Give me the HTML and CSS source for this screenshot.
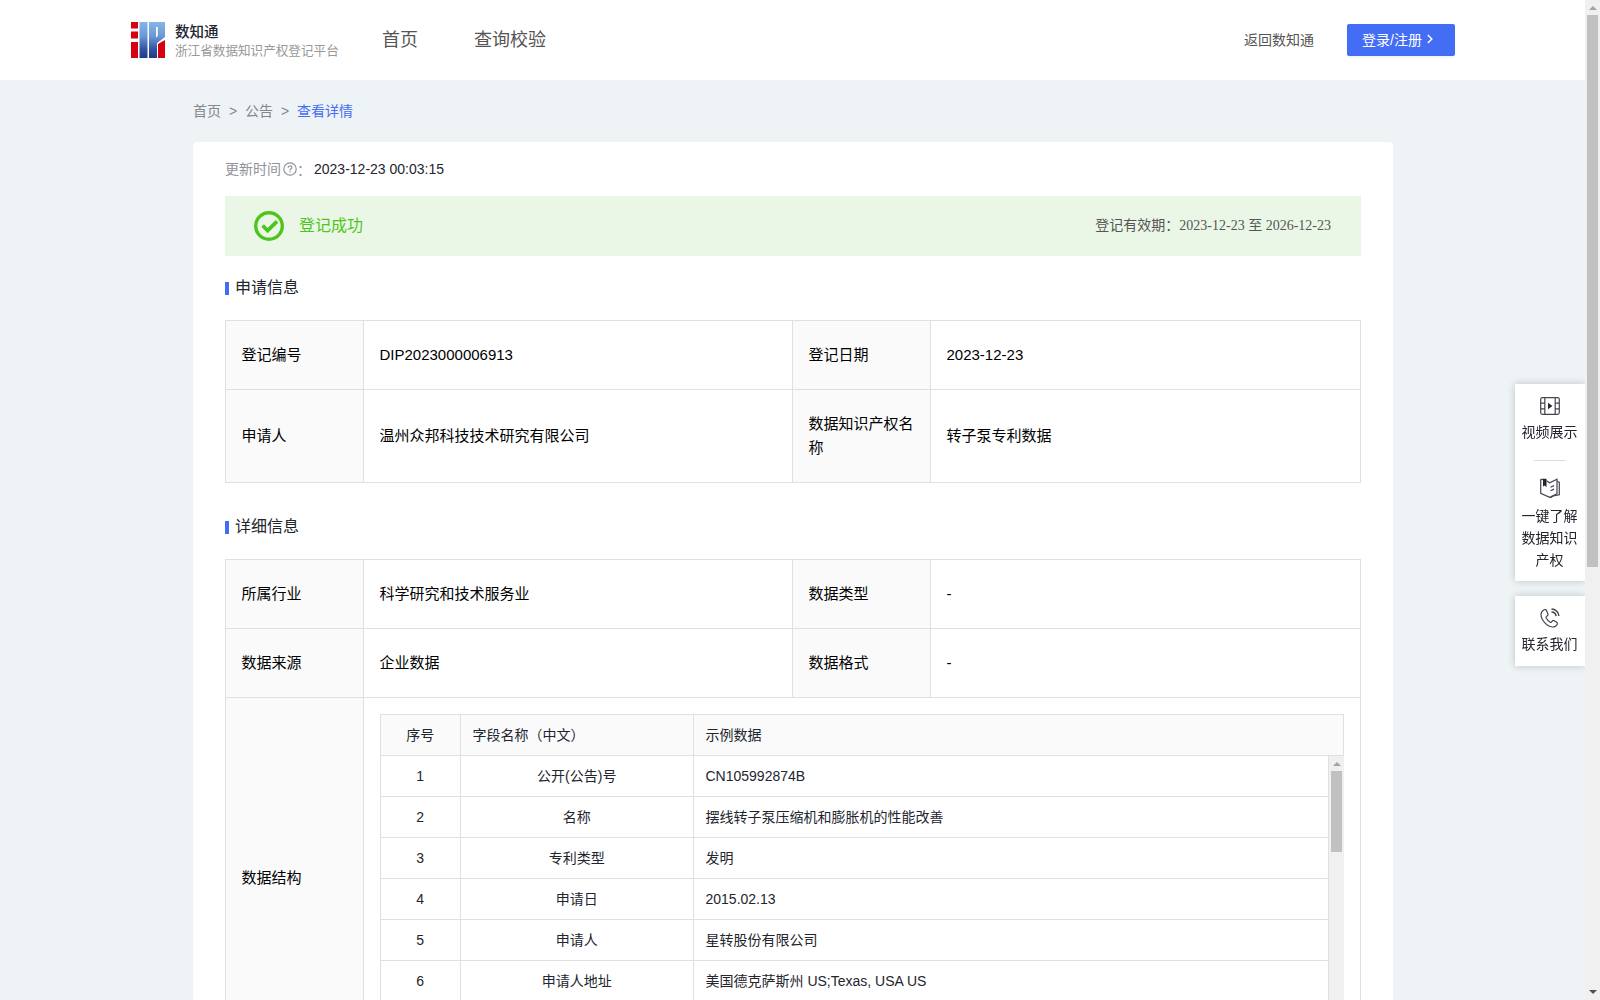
FILE: index.html
```html
<!DOCTYPE html>
<html lang="zh-CN">
<head>
  <meta charset="UTF-8">
  <meta name="viewport" content="width=device-width, initial-scale=1.0">
  <title>浙江省数据知识产权登记平台</title>
  <link rel="stylesheet" href="styles.css">
</head>
<body>
  <div class="page">
    <header class="header">
      <a href="#" class="brand">
        <svg class="logo" viewBox="0 0 34 36" width="34" height="36">
          <defs>
            <linearGradient id="blue" x1="0" y1="0" x2="0" y2="1">
              <stop offset="0" stop-color="#86b4e8"/>
              <stop offset="0.4" stop-color="#6a98d6"/>
              <stop offset="0.75" stop-color="#3454a2"/>
              <stop offset="1" stop-color="#253a85"/>
            </linearGradient>
          </defs>
          <path fill="#d7000f" d="M0 0h7v6.5H0zM0 9.500h7v7H0zM0 20h7v16H0zM27 22l7-4v18h-7z"/>
          <path fill="url(#blue)" fill-rule="evenodd" d="M8.500 0h8v36h-8zM18 0h16v15l-8 6v15h-8zM25 5v10.500l1.800-1.500V5z"/>
        </svg>
        <div class="brand-text">
          <div class="brand-name">数知通</div>
          <div class="brand-sub">浙江省数据知识产权登记平台</div>
        </div>
      </a>
      <nav class="nav">
        <a href="#">首页</a>
        <a href="#">查询校验</a>
      </nav>
      <div class="header-right">
        <a href="#" class="back">返回数知通</a>
        <a href="#" class="login">登录/注册
          <svg viewBox="0 0 8 10" width="8" height="10"><path d="M1.8 1l4 4-4 4" fill="none" stroke="#fff" stroke-width="1.5"/></svg>
        </a>
      </div>
    </header>

    <main class="main">
      <div class="breadcrumb">
        <a href="#">首页</a><span>&gt;</span><a href="#">公告</a><span>&gt;</span><a href="#" class="current">查看详情</a>
      </div>

      <section class="card">
        <div class="update">
          <span class="update-label">更新时间</span>
          <svg viewBox="0 0 14 14" width="14" height="14" fill="none" stroke="#909399">
            <circle cx="7" cy="7" r="6.2" stroke-width="1.2"/>
            <path d="M5.1 5.7C5.1 3.2 8.9 3.3 8.9 5.5 8.9 6.8 7 6.9 7 8.4M7 9.3v1.2" stroke-width="1.2"/>
          </svg>
          <span class="colon">：</span>
          <span class="time">2023-12-23 00:03:15</span>
        </div>

        <div class="status">
          <svg viewBox="0 0 30 30" width="30" height="30" fill="none" stroke="#4fc51c">
            <circle cx="15" cy="15" r="13.3" stroke-width="3.4"/>
            <path d="M8.6 14.5l5 5 9.4-9.2" stroke-width="3.8"/>
          </svg>
          <span class="status-text">登记成功</span>
          <span class="validity">登记有效期：2023-12-23 至 2026-12-23</span>
        </div>

        <h2 class="title"><span>申请信息</span></h2>
        <div class="info apply">
          <div class="label">登记编号</div>
          <div class="value">DIP2023000006913</div>
          <div class="label">登记日期</div>
          <div class="value">2023-12-23</div>
          <div class="label">申请人</div>
          <div class="value">温州众邦科技技术研究有限公司</div>
          <div class="label">数据知识产权名称</div>
          <div class="value">转子泵专利数据</div>
        </div>

        <h2 class="title"><span>详细信息</span></h2>
        <div class="info detail">
          <div class="label">所属行业</div>
          <div class="value">科学研究和技术服务业</div>
          <div class="label">数据类型</div>
          <div class="value">-</div>
          <div class="label">数据来源</div>
          <div class="value">企业数据</div>
          <div class="label">数据格式</div>
          <div class="value">-</div>
          <div class="label">数据结构</div>
          <div class="value wide">
            <div class="fields">
              <div class="row head"><div>序号</div><div>字段名称（中文）</div><div>示例数据</div></div>
              <div class="fields-body">
                <div class="rows">
                  <div class="row"><div>1</div><div>公开(公告)号</div><div>CN105992874B</div></div>
                  <div class="row"><div>2</div><div>名称</div><div>摆线转子泵压缩机和膨胀机的性能改善</div></div>
                  <div class="row"><div>3</div><div>专利类型</div><div>发明</div></div>
                  <div class="row"><div>4</div><div>申请日</div><div>2015.02.13</div></div>
                  <div class="row"><div>5</div><div>申请人</div><div>星转股份有限公司</div></div>
                  <div class="row"><div>6</div><div>申请人地址</div><div>美国德克萨斯州 US;Texas, USA US</div></div>
                </div>
                <div class="scrollbar">
                  <i class="arrow up"></i>
                  <div class="thumb"></div>
                </div>
              </div>
            </div>
          </div>
        </div>
      </section>
    </main>
  </div>

  <div class="scrollbar page-scroll">
    <i class="arrow up"></i>
    <div class="thumb"></div>
    <i class="arrow down"></i>
  </div>

  <aside class="side">
    <div class="side-box first">
      <a href="#" class="side-item">
        <svg viewBox="0 0 20 18" width="20" height="18" fill="none" stroke="#45454f" stroke-width="1.2">
          <rect x="0.7" y="0.7" width="18.6" height="16.6" rx="1.8"/>
          <path d="M4.8 1v16M15.2 1v16M1 6.2h3.8M1 11.8h3.8M15.2 6.2H19M15.2 11.8H19"/>
          <path d="M8 5.8v6.4l4.4-3.2z" fill="#23252e" stroke="none"/>
        </svg>
        <span>视频展示</span>
      </a>
      <div class="divider"></div>
      <a href="#" class="side-item">
        <svg viewBox="0 0 20 21" width="20" height="21" fill="none" stroke="#45454f" stroke-width="1.2">
          <path d="M3 1.2L.7 1.800v13.500l9 4L17 15.800V1.200L9.700 4.700 6.500 2.800"/>
          <path d="M17 3.500l2.300.6v12.700l-6 1.200-3 1.700M10.500 9.300l3.500-1.700M10.500 12.800l3.500-1.700"/>
          <path d="M3 .8h3.500v8.400L4.700 7.500 3 8.600z" fill="#23252e" stroke="none"/>
        </svg>
        <span>一键了解数据知识产权</span>
      </a>
    </div>
    <div class="side-box second">
      <a href="#" class="side-item">
        <svg viewBox="0 0 20 20" width="20" height="20" fill="none" stroke="#45454f" stroke-width="1.2">
          <path d="M4.2 1.700C2.500 2.500 1 4 1 6.500c0 5.500 6.500 12.500 12 12.500 2 0 3.500-1.200 4.300-2.800.4-.9.1-1.500-.6-2l-2.500-1.500c-.8-.5-1.500-.3-2 .4l-.8 1c-.5.6-1 .4-1.600 0C8.300 13 7 11.500 6.200 10c-.3-.6-.2-1.200.3-1.500l.9-.7c.7-.5.8-1 .5-1.800L6.500 2.500c-.4-.9-1.300-1.300-2.300-.8z"/>
          <path d="M11.500 1c4 0 7 3 7.300 7M11.500 4c2.800 0 4.300 1.500 4.600 4.200" stroke-width="1.500"/>
        </svg>
        <span>联系我们</span>
      </a>
    </div>
  </aside>
</body>
</html>
```
FILE: styles.css
```css
* {
  margin: 0;
  padding: 0;
  box-sizing: border-box;
}

body {
  display: flex;
  height: 100vh;
  overflow: hidden;
  background-color: #eef3f6;
  color: #23252e;
  font-family: "Liberation Sans", "Noto Sans CJK SC", sans-serif;
  font-size: 14px;
}

a {
  color: inherit;
  text-decoration: none;
}

svg {
  display: block;
  flex: none;
}

.page {
  flex: 1;
  height: 100vh;
  overflow: hidden;
}

/* Header */
.header {
  display: flex;
  align-items: center;
  height: 80px;
  padding: 0 130px 0 131px;
  background-color: #fff;
}

.brand {
  display: flex;
  align-items: center;
  gap: 10px;
  width: 251px;
}

.brand-text {
  padding-top: 2px;
}

.brand-name {
  color: #23252e;
  font-size: 14.5px;
  font-weight: 500;
  line-height: 20px;
}

.brand-sub {
  color: #999;
  font-size: 12.6px;
  line-height: 19px;
  white-space: nowrap;
}

.nav {
  display: flex;
  gap: 56px;
  color: #555;
  font-size: 18px;
  line-height: 26px;
}

.header-right {
  display: flex;
  align-items: center;
  gap: 33px;
  margin-left: auto;
  color: #555;
}

.back {
  padding-bottom: 3px;
}

.login {
  display: flex;
  align-items: center;
  gap: 4px;
  width: 108px;
  height: 32px;
  padding: 0 0 2px 15px;
  border-radius: 2px;
  background-color: #446df6;
  box-shadow: 0 2px 2px rgba(0, 0, 0, 0.05);
  color: #fff;
}

/* Content */
.main {
  width: 1200px;
  margin-left: 193px;
}

.breadcrumb {
  display: flex;
  height: 62px;
  line-height: 62px;
  color: #85878c;
}

.breadcrumb span {
  width: 24px;
  text-align: center;
}

.breadcrumb .current {
  color: #446df6;
}

.card {
  height: 1100px;
  padding: 0 32px;
  border-radius: 4px;
  background-color: #fff;
}

.update {
  display: flex;
  align-items: center;
  height: 54px;
  color: #909399;
}

.update-label {
  padding-bottom: 2px;
}

.update svg {
  margin-left: 2px;
}

.colon {
  width: 17px;
}

.time {
  color: #23252e;
}

.status {
  display: flex;
  align-items: center;
  height: 60px;
  padding: 0 30px 0 29px;
  background-color: #ebf7e6;
}

.status-text {
  margin-left: 15px;
  padding-bottom: 4px;
  color: #4fc51c;
  font-size: 16px;
}

.validity {
  margin-left: auto;
  padding-bottom: 4px;
  color: #555;
  font-family: "Liberation Serif", "Noto Sans CJK SC", serif;
}

.title {
  display: flex;
  align-items: center;
  height: 64px;
  font-size: 16px;
  font-weight: 400;
}

.title::before {
  content: '';
  width: 4px;
  height: 13px;
  margin: 1px 6px 0 0;
  background-color: #446df6;
}

.title span {
  padding-bottom: 4px;
}

.info {
  display: grid;
  grid-template-columns: 138px 429px 138px 430px;
  border-top: 1px solid #e0e0e0;
  border-left: 1px solid #e0e0e0;
  color: #000;
  font-size: 15px;
  line-height: 23.5px;
}

.apply {
  grid-template-rows: 69px 93px;
  margin-bottom: 12px;
}

.detail {
  grid-template-rows: 69px 69px 362px;
}

.label,
.value {
  display: flex;
  align-items: center;
  padding: 0 15px 1px 15.5px;
  border-right: 1px solid #e0e0e0;
  border-bottom: 1px solid #e0e0e0;
}

.label {
  background-color: #fafafa;
}

.wide {
  grid-column: span 3;
  padding: 16px;
}

/* Field list */
.fields {
  width: 964px;
  height: 330px;
  border-top: 1px solid #e0e0e0;
  border-left: 1px solid #e0e0e0;
  color: #23252e;
  font-size: 14px;
}

.fields-body {
  display: flex;
  height: 288px;
  overflow: hidden;
}

.rows {
  flex: 1;
}

.row {
  display: grid;
  grid-template-columns: 80px 233px 1fr;
  height: 41px;
  line-height: 40px;
}

.row div {
  padding: 0 12px 0 11.5px;
  border-right: 1px solid #e0e0e0;
  border-bottom: 1px solid #e0e0e0;
  text-align: center;
}

.row div:last-child,
.head div:nth-child(2) {
  text-align: left;
}

.head {
  background-color: #fafafa;
}

/* Scrollbars */
.scrollbar {
  display: flex;
  flex-direction: column;
  align-items: center;
  flex: none;
  width: 15px;
  background-color: #f0f0f0;
}

.thumb {
  width: 11px;
  height: 81px;
  background-color: #c1c1c1;
}

.page-scroll .thumb {
  height: 552px;
}

.arrow {
  width: 0;
  height: 0;
  border: 4px solid transparent;
  border-top-width: 0;
  border-bottom-width: 0;
}

.up {
  margin: 6px 0 5px;
  border-bottom: 4px solid #a3a3a3;
}

.down {
  margin: auto 0 6px;
  border-top: 4px solid #505050;
}

/* Floating tools */
.side {
  position: fixed;
  top: 384px;
  right: 15px;
  width: 70px;
  clip-path: inset(-20px 0 -20px -20px);
}

.side-box {
  background-color: #fff;
  box-shadow: 0 0 8px rgba(0, 0, 0, 0.2);
}

.first {
  height: 197px;
  margin-bottom: 15px;
  padding-top: 13px;
}

.second {
  height: 70px;
  padding-top: 12px;
}

.side-item {
  display: flex;
  flex-direction: column;
  align-items: center;
  gap: 6px;
  padding: 0 7px 0 6px;
  line-height: 22px;
  text-align: center;
}

.second .side-item {
  gap: 5px;
}

.divider {
  width: 32px;
  height: 1px;
  margin: 17px auto;
  background-color: #ddd;
}
```
